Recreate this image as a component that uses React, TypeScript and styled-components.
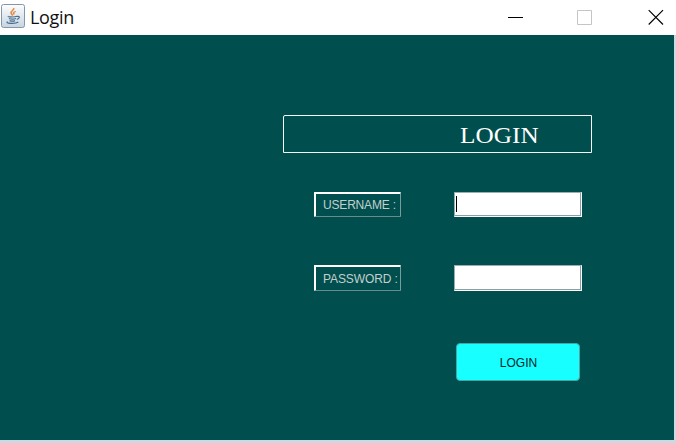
import React from "react";
import styled, { createGlobalStyle } from "styled-components";

const GlobalStyle = createGlobalStyle`
  * { box-sizing: border-box; }
  body { margin: 0; background: #ccd9e2; overflow: hidden; }
`;

const Window = styled.div`
  width: 676px;
  height: 443px;
  font-family: "Liberation Sans", Arial, sans-serif;
`;

const TitleBar = styled.header`
  display: flex;
  align-items: center;
  height: 35px;
  padding: 0 12px 0 1px;
  background: #fff;
`;

const WindowTitle = styled.span`
  flex: 1;
  margin: 0 0 1px 5px;
  font: 18px/24px "Open Sans", "Noto Sans", sans-serif;
  letter-spacing: -0.3px;
  color: #111;
`;

const Controls = styled.div`
  display: flex;
  margin-top: -2px;
  svg { display: block; }
  svg + svg { margin-left: 53px; }
  svg:last-child { margin-left: 55px; }
`;

const Content = styled.main`
  display: flex;
  flex-direction: column;
  width: 674px;
  height: 405px;
  padding: 80px 82px 0 283px;
  background: #004e4d;
`;

const Heading = styled.h1`
  height: 38px;
  margin: 0;
  padding-left: 176px;
  border: 1px solid #f4ffff;
  border-top-left-radius: 2px;
  font: 400 24px/39px "Liberation Serif", serif;
  color: #fff;
`;

const HeadingText = styled.span`
  display: inline-block;
  transform: scaleX(1.05);
  transform-origin: left;
  letter-spacing: 0.1px;
`;

const Row = styled.div<{ $top: number; $height: number }>`
  display: flex;
  justify-content: space-between;
  height: ${(p) => p.$height}px;
  margin: ${(p) => p.$top}px 10px 0 31px;
`;

const Label = styled.label<{ $tracking: number; $line: number }>`
  width: 87px;
  padding: 0 0 0 7px;
  border: solid;
  border-width: 2px 1px 1px 2px;
  border-color: #fff #769d9c #648d8c #fff;
  border-radius: 1px;
  font-size: 12px;
  line-height: ${(p) => p.$line}px;
  letter-spacing: ${(p) => p.$tracking}px;
  white-space: nowrap;
  color: #c2d0cd;
`;

const Field = styled.div`
  display: flex;
  width: 128px;
  padding: 3px 0 0 1px;
  background: #fff;
  border: 1px solid;
  border-color: #9aadb0 #fff #fff #9aadb0;
  box-shadow: inset -1px -1px #8ba0a4;
`;

const Caret = styled.span`
  width: 1px;
  height: 16px;
  background: #000;
`;

const LoginButton = styled.button`
  align-self: flex-end;
  width: 124px;
  height: 38px;
  margin: 52px 12px 0 0;
  padding: 1px 0 0 1px;
  border: 1px solid #43a7a8;
  border-radius: 4px;
  background: #17ffff;
  font: 12px/36px "Liberation Sans", Arial, sans-serif;
  color: #07282e;
`;

const IconSvg = styled.svg`
  display: block;
  margin-top: -4px;
`;

const JavaIcon = () => (
  <IconSvg width="24" height="24" viewBox="0 0 24 24" fill="none">
    <defs>
      <linearGradient id="tile" x1="0" y1="0" x2="0" y2="1">
        <stop stopColor="#fdfeff" />
        <stop offset="1" stopColor="#c5d4e1" />
      </linearGradient>
    </defs>
    <rect x=".5" y=".5" width="23" height="23" rx="2" fill="url(#tile)" stroke="#8596a6" />
    <path d="M12.8 4c.8 2.4-4.3 3.3-2.5 5.5l1.4 2M14.7 7.4c-2.6 1-2.6 1.8-1.5 3" stroke="#e8863b" strokeWidth="1.5" />
    <path d="M7.5 12.2c-2 .8 6 1.2 8.4.1M8 14.5c2 .8 5 .8 7 0M8.6 16.6c1.8.7 4 .7 5.4 0M16 12.4c3.6-.6 2.7 2.4-.2 3M6.8 17.8c-4 1.4 7.5 2.5 10.5.2" stroke="#486b8c" strokeWidth="1.2" />
  </IconSvg>
);

export default function App() {
  return (
    <>
      <GlobalStyle />
      <Window>
        <TitleBar>
          <JavaIcon />
          <WindowTitle>Login</WindowTitle>
          <Controls>
            <svg width="16" height="16"><path d="M0 8.5h15" stroke="#000" /></svg>
            <svg width="16" height="16"><path d="M.5 1.5h14v14H.5z" fill="none" stroke="#c5c5c5" /></svg>
            <svg width="16" height="16"><path d="M.7 1.2l14.3 14.3M15 1.2L.7 15.5" stroke="#000" strokeWidth="1.15" /></svg>
          </Controls>
        </TitleBar>
        <Content>
          <Heading><HeadingText>LOGIN</HeadingText></Heading>
          <Row $top={39} $height={25}>
            <Label $tracking={-0.18} $line={22}>USERNAME :</Label>
            <Field><Caret /></Field>
          </Row>
          <Row $top={48} $height={26}>
            <Label $tracking={-0.1} $line={24}>PASSWORD :</Label>
            <Field />
          </Row>
          <LoginButton>LOGIN</LoginButton>
        </Content>
      </Window>
    </>
  );
}
